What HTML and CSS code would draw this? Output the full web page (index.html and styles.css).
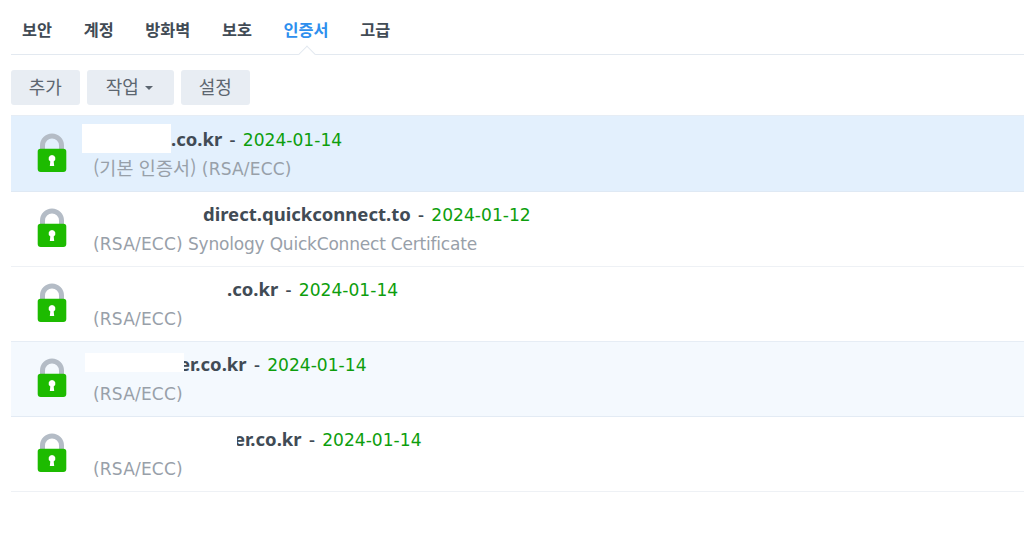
FILE: index.html
```html
<!DOCTYPE html>
<html lang="ko">
<head>
<meta charset="utf-8">
<title>인증서</title>
<link rel="stylesheet" href="styles.css">
</head>
<body>
<svg class="defs" width="0" height="0" aria-hidden="true">
  <symbol id="lock" viewBox="0 0 30 40">
    <path d="M5.500 20V12.500a9.500 9.500 0 0 1 19 0V20" fill="none" stroke="#b4bcc6" stroke-width="5"/>
    <path d="M3.500 15.800h23a2.800 2.800 0 0 1 2.800 2.800v17.400a3 3 0 0 1-3 3H3.700a3 3 0 0 1-3-3V18.600a2.800 2.800 0 0 1 2.800-2.800z" fill="#1dbb00"/>
    <path d="M15 22a3.500 3.500 0 0 1 1.700 6.500l.5 4.500h-4.400l.5-4.500A3.500 3.500 0 0 1 15 22z" fill="#fff"/>
  </symbol>
</svg>
<nav class="tabs">
  <a class="tab">보안</a>
  <a class="tab">계정</a>
  <a class="tab">방화벽</a>
  <a class="tab">보호</a>
  <a class="tab active">인증서</a>
  <a class="tab">고급</a>
</nav>
<div class="toolbar">
  <button class="btn">추가</button>
  <button class="btn btn-menu">작업<span class="caret"></span></button>
  <button class="btn">설정</button>
</div>
<ul class="list">
  <li class="row selected">
    <svg class="lock"><use href="#lock"/></svg>
    <div class="info">
      <div class="name"><span class="mask m1"></span>.co.kr<span class="sep"> - </span><span class="date">2024-01-14</span></div>
      <div class="desc"><span class="ko">(기본 인증서)</span> <span class="tag">(RSA/ECC)</span></div>
    </div>
  </li>
  <li class="row">
    <svg class="lock"><use href="#lock"/></svg>
    <div class="info">
      <div class="name"><span class="mask m2"></span>direct.quickconnect.to<span class="sep"> - </span><span class="date">2024-01-12</span></div>
      <div class="desc"><span class="tag">(RSA/ECC)</span> Synology QuickConnect Certificate</div>
    </div>
  </li>
  <li class="row">
    <svg class="lock"><use href="#lock"/></svg>
    <div class="info">
      <div class="name"><span class="mask m3"></span>.co.kr<span class="sep"> - </span><span class="date">2024-01-14</span></div>
      <div class="desc"><span class="tag">(RSA/ECC)</span></div>
    </div>
  </li>
  <li class="row hover">
    <svg class="lock"><use href="#lock"/></svg>
    <div class="info">
      <div class="name"><span class="mask m4"></span>er.co.kr<span class="sep"> - </span><span class="date">2024-01-14</span></div>
      <div class="desc"><span class="tag">(RSA/ECC)</span></div>
    </div>
  </li>
  <li class="row">
    <svg class="lock"><use href="#lock"/></svg>
    <div class="info">
      <div class="name"><span class="mask m5"></span>er.co.kr<span class="sep"> - </span><span class="date">2024-01-14</span></div>
      <div class="desc"><span class="tag">(RSA/ECC)</span></div>
    </div>
  </li>
</ul>
</body>
</html>
```
FILE: styles.css
```css
* { box-sizing: border-box; }
html, body { margin: 0; padding: 0; background: #fff; }
body {
  width: 1024px;
  height: 534px;
  overflow: hidden;
  padding-left: 11px;
  font-family: "Noto Sans", "Noto Sans CJK KR", sans-serif;
  font-size: 18px;
  color: #414b55;
}
.defs { position: absolute; }
.tabs {
  display: flex;
  gap: 31.700px;
  height: 55px;
  padding: 18px 0 0 11px;
  border-bottom: 1px solid #e3e9f0;
  position: relative;
}
.tab {
  font-size: 16.300px;
  font-weight: 700;
  line-height: 24px;
  color: #414b55;
  position: relative;
  height: 24px;
}
.tab.active { color: #2e8fee; }
.tab.active::after {
  content: "";
  position: absolute;
  left: 50%;
  top: 30px;
  width: 11px;
  height: 11px;
  margin-left: -5.500px;
  background: #fff;
  border-left: 1px solid #e3e9f0;
  border-top: 1px solid #e3e9f0;
  transform: rotate(45deg);
}
.toolbar {
  display: flex;
  gap: 7.500px;
  padding-top: 15px;
  height: 60px;
}
.btn {
  font: inherit;
  font-size: 18px;
  height: 35px;
  width: 68.500px;
  padding: 0 0 3px;
  border: 0;
  border-radius: 3px;
  background: #e8edf3;
  color: #5c6670;
  display: flex;
  align-items: center;
  justify-content: center;
}
.btn-menu { width: 86.500px; padding-right: 2px; }
.caret {
  margin-left: 6px;
  margin-top: 3px;
  border-left: 4.500px solid transparent;
  border-right: 4.500px solid transparent;
  border-top: 4.500px solid #5c6670;
}
.list {
  list-style: none;
  margin: 0;
  padding: 0;
  border-top: 1px solid #e6edf5;
}
.row {
  display: flex;
  height: 75px;
  padding-left: 26px;
  border-bottom: 1px solid #eef1f5;
}
.row.selected { background: #e3f0fd; border-bottom-color: #dfe9f4; height: 76px; }
.row.hover { background: #f4f9fe; border-bottom-color: #e3ebf4; box-shadow: 0 -1px 0 #e6edf5; }
.lock { width: 30px; height: 40px; margin-top: 16px; flex: none; }
.selected .lock { margin-top: 17px; }
.info { margin-left: 26px; padding-top: 8px; white-space: nowrap; }
.selected .info { padding-top: 9px; }
.name { font-weight: 700; font-size: 18.500px; line-height: 28px; height: 28px; }
.sep { font-weight: 500; white-space: pre; word-spacing: 2.500px; }
.date { font-weight: 400; font-size: 17.100px; font-family: "DejaVu Sans", "Noto Sans", sans-serif; color: #0d9e0d; }
.desc {
  margin-top: 2px;
  color: #98a0a9;
  font-family: "DejaVu Sans", "Noto Sans CJK KR", sans-serif;
  font-size: 17px;
  letter-spacing: -0.200px;
  line-height: 28px;
}
.selected .desc { margin-top: 0; }
.ko { font-size: 18.500px; letter-spacing: 0.100px; font-family: "Noto Sans CJK KR", sans-serif; }
.tag { letter-spacing: 0.200px; }
.mask {
  display: inline-block;
  position: relative;
  height: 28px;
  vertical-align: top;
  background: #fff;
}
.m1 { width: 89px; margin-left: -11px; height: 29px; margin-top: -1px; }
.m2 { width: 110px; }
.m3 { width: 134px; }
.m4 { width: 99px; margin-left: -8px; margin-right: -5px; height: 19px; margin-top: 3px; }
.m5 { width: 144px; margin-right: -3px; }
```
